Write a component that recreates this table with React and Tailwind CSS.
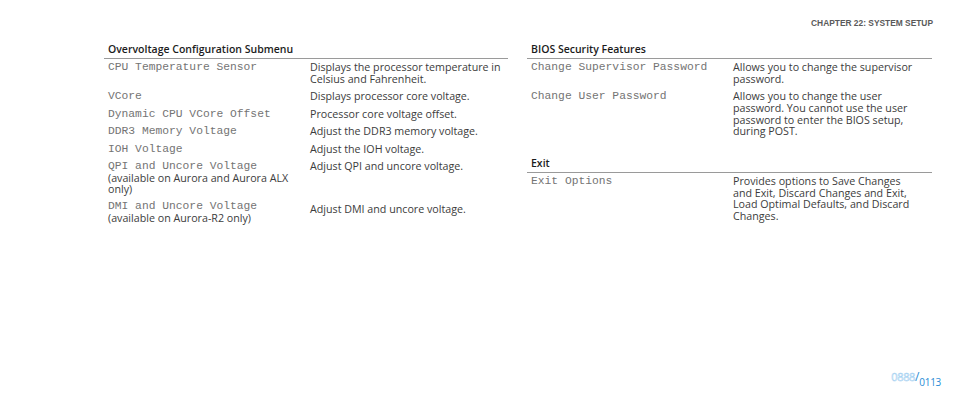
import React from 'react'

const leftRows = [
  { key: 'CPU Temperature Sensor', desc: 'Displays the processor temperature in Celsius and Fahrenheit.' },
  { key: 'VCore', desc: 'Displays processor core voltage.' },
  { key: 'Dynamic CPU VCore Offset', desc: 'Processor core voltage offset.' },
  { key: 'DDR3 Memory Voltage', desc: 'Adjust the DDR3 memory voltage.' },
  { key: 'IOH Voltage', desc: 'Adjust the IOH voltage.' },
  { key: 'QPI and Uncore Voltage', note: '(available on Aurora and Aurora ALX only)', desc: 'Adjust QPI and uncore voltage.' },
  { key: 'DMI and Uncore Voltage', note: '(available on Aurora-R2 only)', desc: 'Adjust DMI and uncore voltage.', offset: true },
]

const securityRows = [
  { key: 'Change Supervisor Password', desc: 'Allows you to change the supervisor password.' },
  { key: 'Change User Password', desc: 'Allows you to change the user password. You cannot use the user password to enter the BIOS setup, during POST.' },
]

const exitRows = [
  { key: 'Exit Options', desc: 'Provides options to Save Changes and Exit, Discard Changes and Exit, Load Optimal Defaults, and Discard Changes.' },
]

function Row({ row, narrow }) {
  return (
    <div className="flex items-start">
      <div className="w-[202px] shrink-0 pr-[12px]">
        <div className="font-['Liberation_Mono',monospace] text-[11.3px] leading-[11.7px] text-[#747474] whitespace-nowrap">
          {row.key}
        </div>
        {row.note && (
          <div className="font-['Open_Sans',sans-serif] text-[10.7px] leading-[11.3px] text-[#3c3c3c]">{row.note}</div>
        )}
      </div>
      <div
        className={`${narrow ? 'w-[188px]' : 'w-[199px]'} ${row.offset ? 'pt-[3px]' : ''} font-['Open_Sans',sans-serif] text-[10.7px] leading-[11.7px] text-[#3c3c3c]`}
      >
        {row.desc}
      </div>
    </div>
  )
}

function Section({ title, rows, narrow, className = '' }) {
  return (
    <div className={className}>
      <div className="border-b border-[#9a9a9a] pl-[4px] pb-[3px] font-['Open_Sans',sans-serif] font-semibold text-[10.5px] leading-[12px] text-[#1c1c1c]">
        {title}
      </div>
      <div className="flex flex-col gap-[5.8px] pt-[3px] pl-[4px]">
        {rows.map((row) => (
          <Row key={row.key} row={row} narrow={narrow} />
        ))}
      </div>
    </div>
  )
}

export default function App() {
  return (
    <div className="w-[954px] h-[403px] bg-white flex flex-col">
      <div className="pt-[18px] pr-[21px] text-right font-['Liberation_Sans',sans-serif] font-bold text-[8.4px] leading-[10px] text-[#5a5a5a]">
        CHAPTER 22: SYSTEM SETUP
      </div>

      <div className="flex gap-[19px] pl-[104px] pt-[15px]">
        <Section title="Overvoltage Configuration Submenu" rows={leftRows} className="w-[404px]" />
        <div className="w-[405px]">
          <Section title="BIOS Security Features" rows={securityRows} narrow />
          <Section title="Exit" rows={exitRows} narrow className="mt-[19px]" />
        </div>
      </div>

      <div className="mt-auto pb-[16px] pr-[13px] flex justify-end items-start font-['Open_Sans',sans-serif]">
        <span className="text-[11px] leading-[10px] text-transparent [-webkit-text-stroke:0.5px_#9ccdf0] tracking-[-0.4px] mt-[1px]">
          0888
        </span>
        <span className="text-[12px] leading-[12px] text-[#2a8dd6]">/</span>
        <span className="text-[10px] leading-[10px] text-[#2a8dd6] tracking-[-0.3px] mt-[6px]">0113</span>
      </div>
    </div>
  )
}
